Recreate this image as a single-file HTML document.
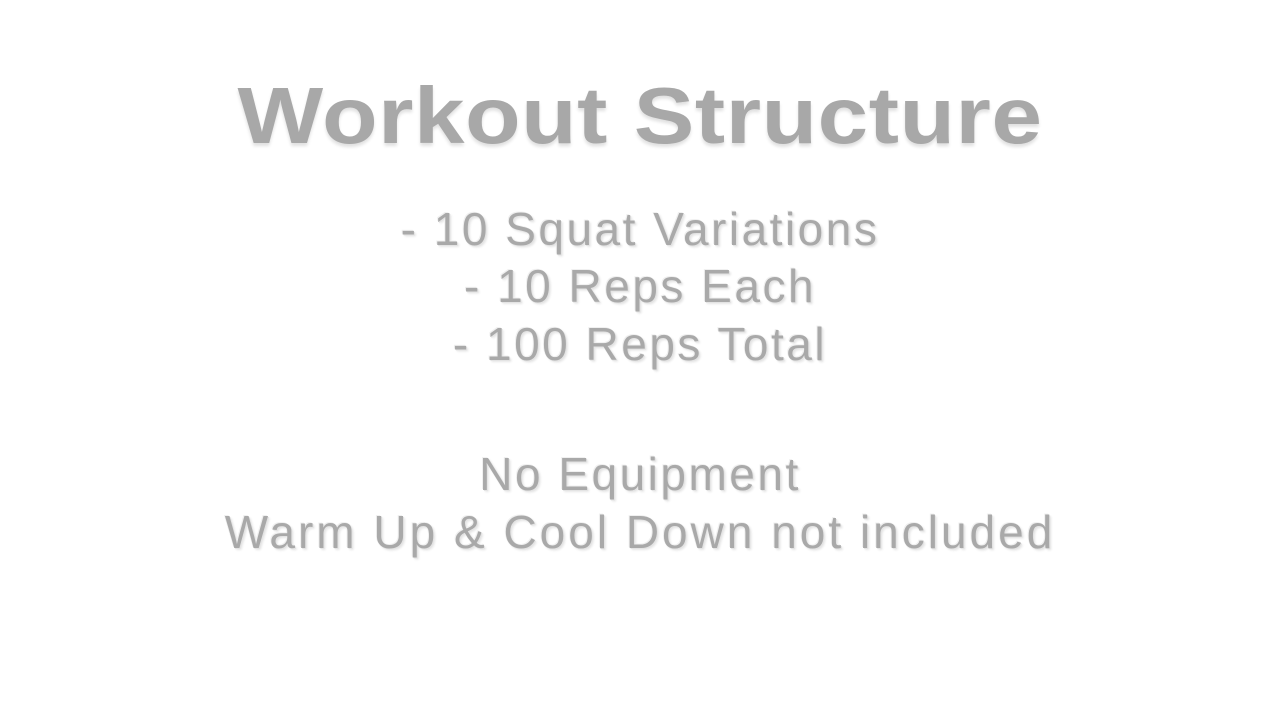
<!DOCTYPE html>
<html><head><meta charset="utf-8"><style>
html,body{margin:0;padding:0;background:#fff;width:1280px;height:720px;overflow:hidden}
.t{position:absolute;left:0;width:1280px;text-align:center;font-family:"Liberation Sans",sans-serif;line-height:1;color:#a9a9a9;white-space:nowrap}
.h{font-size:80px;font-weight:bold;top:76px;letter-spacing:0.5px;color:#a8a8a8;text-shadow:0 3px 3px rgba(0,0,0,0.12);transform:scaleX(1.135);transform-origin:640px 0}
.l{font-size:46px;letter-spacing:2.5px;text-shadow:1px 1px 0 #e4e4e4,-1px -1px 0 #f0f0f0,2px 2px 2px rgba(0,0,0,0.10)}
</style></head><body>
<div class="t h">Workout Structure</div>
<div class="t l" style="top:206px">- 10 Squat Variations</div>
<div class="t l" style="top:263px">- 10 Reps Each</div>
<div class="t l" style="top:321px">- 100 Reps Total</div>
<div class="t l" style="top:451px">No Equipment</div>
<div class="t l" style="top:509px;letter-spacing:3px">Warm Up &amp; Cool Down not included</div>
</body></html>
